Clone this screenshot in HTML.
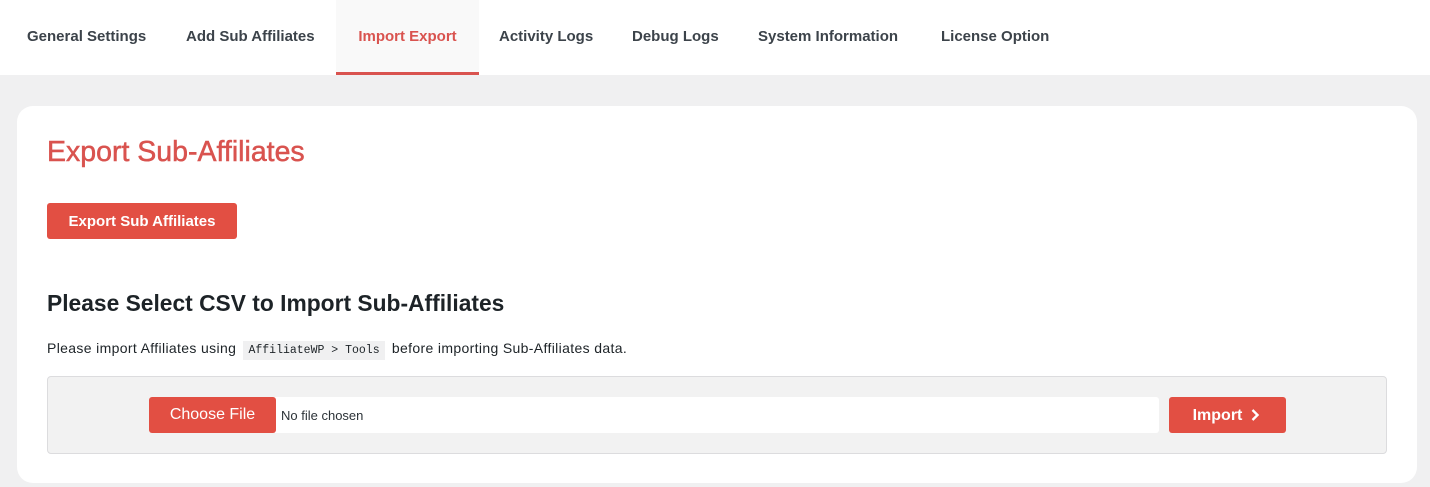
<!DOCTYPE html>
<html><head><style>
*{margin:0;padding:0;box-sizing:border-box}
body{width:1430px;height:487px;background:#f0f0f1;font-family:"Liberation Sans",sans-serif;overflow:hidden;position:relative}
.nav{position:absolute;left:0;top:0;width:1430px;height:75px;background:#fff}
.tab{position:absolute;top:0;height:75px;line-height:73px;font-size:15px;font-weight:bold;color:#3c434a;white-space:nowrap}
.tab.act{background:#f9f9f9;color:#d9534f;border-bottom:3px solid #d9534f;line-height:73px;text-align:center}
.card{position:absolute;left:17px;top:106px;width:1400px;height:377px;background:#fff;border-radius:16px}
h1{position:absolute;left:47px;top:136px;font-size:28.5px;font-weight:normal;color:#d9534f;-webkit-text-stroke:0.5px #d9534f}
.btn{position:absolute;background:#e24f43;color:#fff;border-radius:3px;font-weight:bold;font-size:15px;text-align:center}
h2{position:absolute;left:47px;top:290px;font-size:22.8px;font-weight:bold;color:#1d2327}
p{position:absolute;left:47px;top:340px;font-size:14px;letter-spacing:0.35px;color:#1d2327;white-space:nowrap}
code{font-family:"Liberation Mono",monospace;font-size:11.5px;letter-spacing:0;background:#f0f0f1;padding:3px 5px;margin:0 3px}
.box{position:absolute;left:47px;top:376px;width:1340px;height:78px;background:#f2f2f2;border:1px solid #dcdcde;border-radius:4px}
.file{position:absolute;left:149px;top:397px;width:1010px;height:36px;background:#fff;border-radius:3px}
</style></head><body>
<div class="nav">
<div class="tab" style="left:27px">General Settings</div>
<div class="tab" style="left:186px">Add Sub Affiliates</div>
<div class="tab act" style="left:336px;width:143px">Import Export</div>
<div class="tab" style="left:499px">Activity Logs</div>
<div class="tab" style="left:632px">Debug Logs</div>
<div class="tab" style="left:758px">System Information</div>
<div class="tab" style="left:941px">License Option</div>
</div>
<div class="card"></div>
<h1>Export Sub-Affiliates</h1>
<div class="btn" style="left:47px;top:203px;width:190px;height:36px;line-height:37px">Export Sub Affiliates</div>
<h2>Please Select CSV to Import Sub-Affiliates</h2>
<p>Please import Affiliates using <code>AffiliateWP &gt; Tools</code> before importing Sub-Affiliates data.</p>
<div class="box"></div>
<div class="file"><span style="position:absolute;left:132px;top:11px;font-size:13px;color:#2c3338">No file chosen</span></div>
<div class="btn" style="left:149px;top:397px;width:127px;height:36px;line-height:35px;font-weight:normal;font-size:16px">Choose File</div>
<div class="btn" style="left:1169px;top:397px;width:117px;height:36px;line-height:37px;padding-right:20px;font-size:16px">Import
<svg width="10" height="14" viewBox="0 0 10 14" style="position:absolute;left:81px;top:11px"><path d="M2.5 2 L7.5 7 L2.5 12" stroke="#fff" stroke-width="2.4" fill="none"/></svg></div>
</body></html>
